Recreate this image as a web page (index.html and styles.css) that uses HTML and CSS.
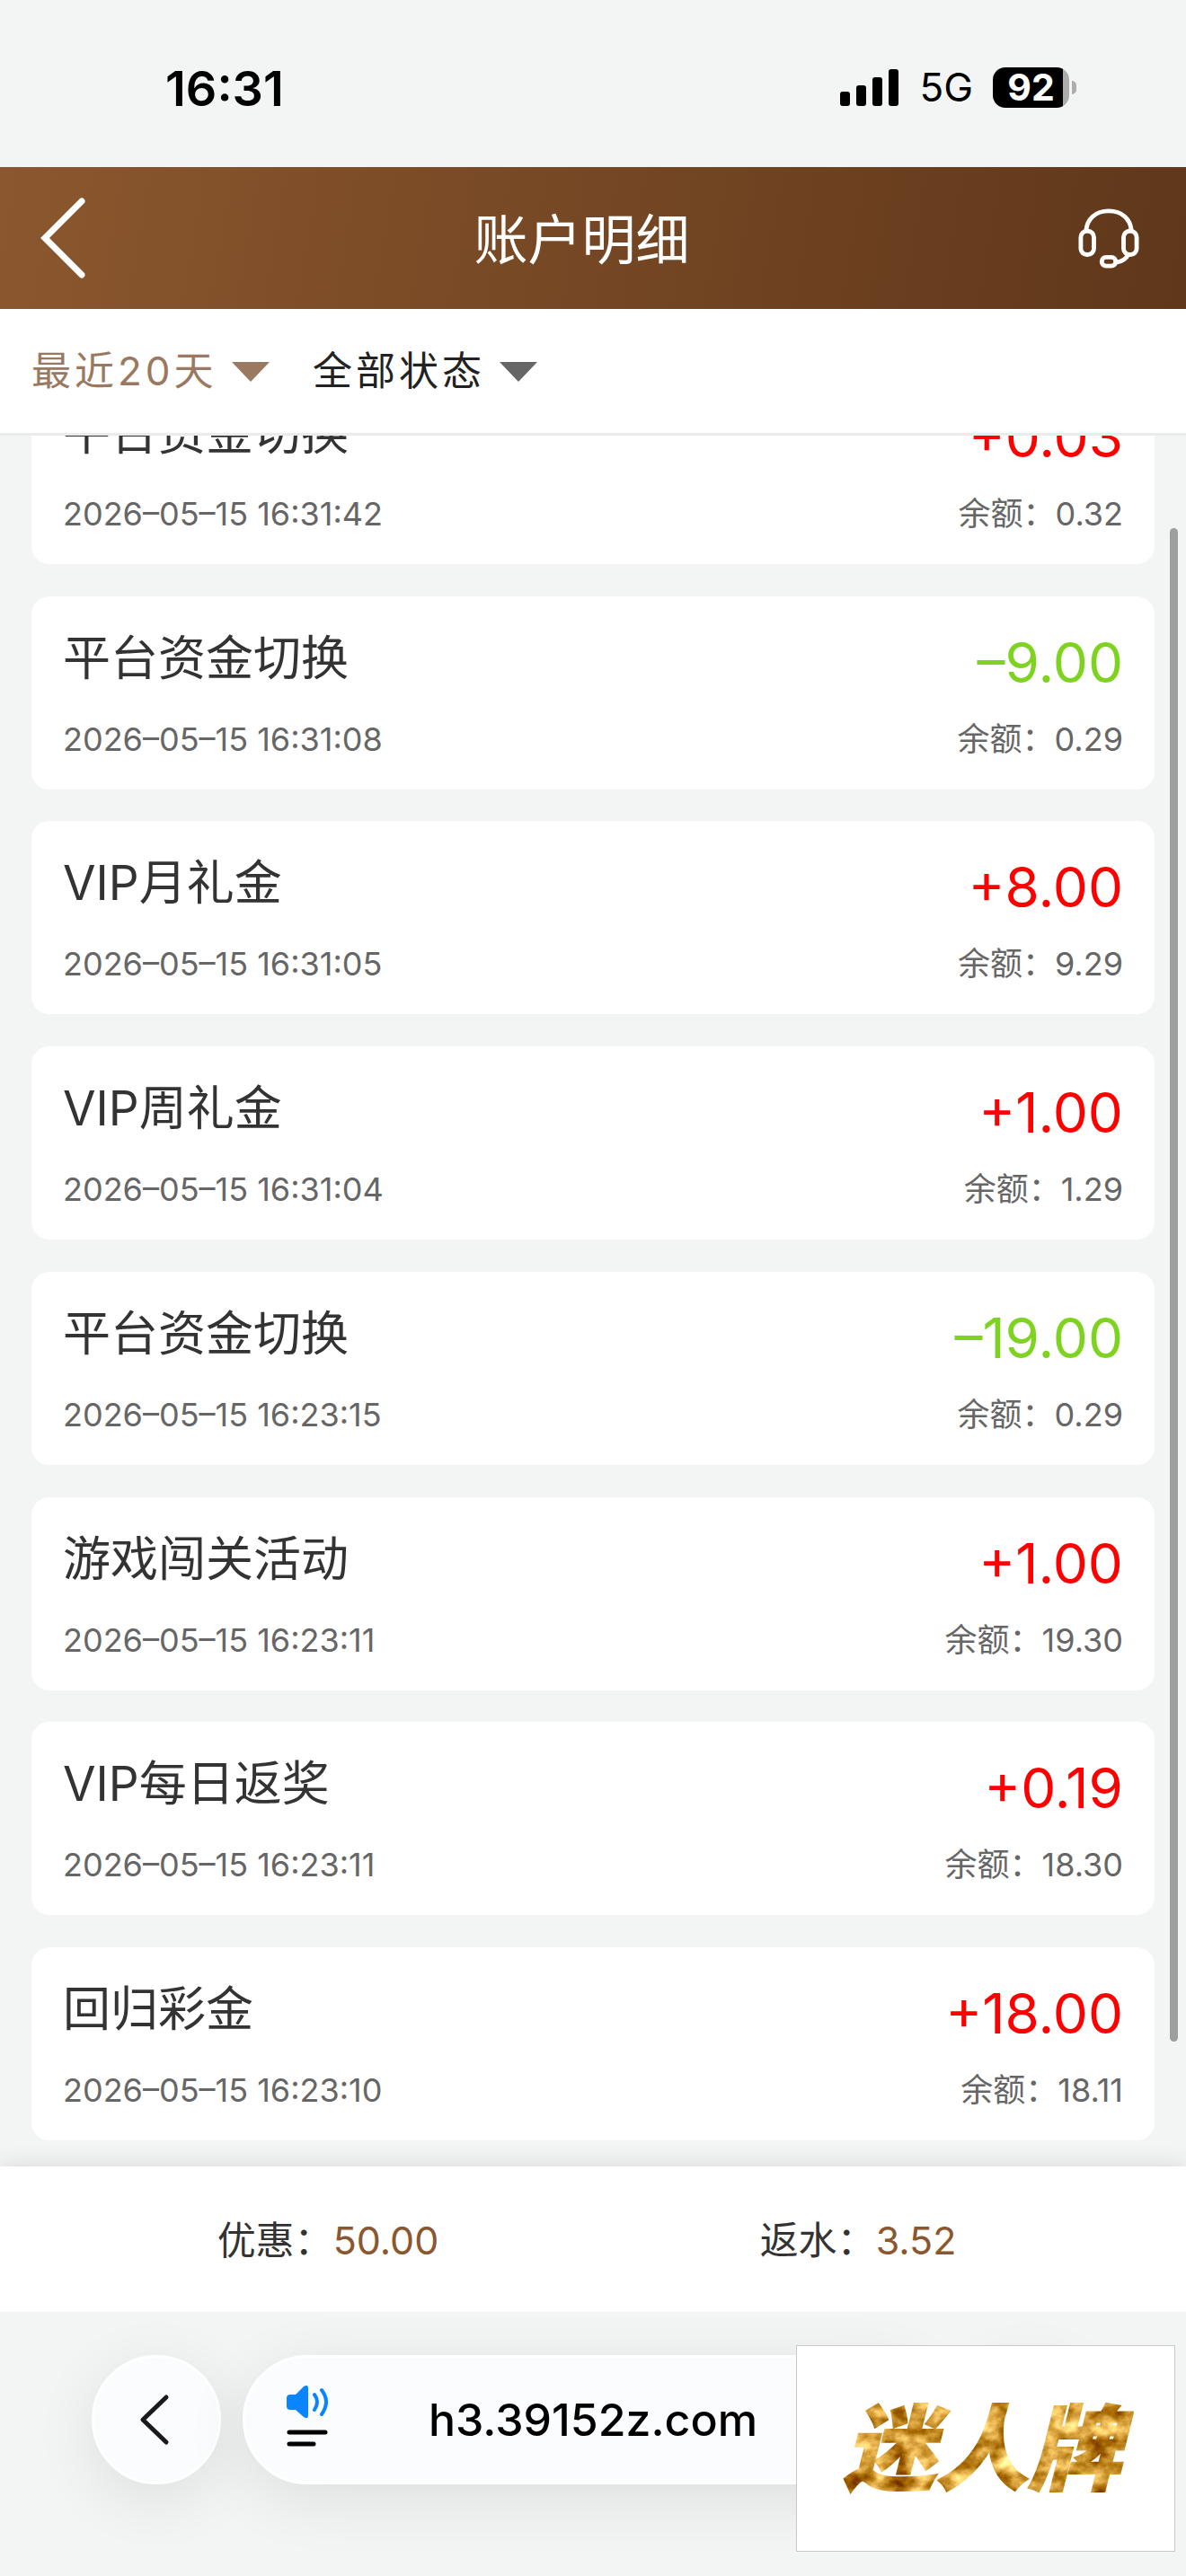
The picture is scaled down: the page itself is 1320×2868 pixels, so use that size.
FILE: index.html
```
<!DOCTYPE html>
<html lang="zh-CN">
<head>
    <meta charset="UTF-8">
    <meta name="viewport" content="width=device-width, initial-scale=1.0">
    <title>账户明细</title>
    <link rel="stylesheet" href="styles.css">
</head>
<body>
    <div class="status-bar">
        <span class="time">16:31</span>
        <div class="status-icons">
            <svg class="signal" viewBox="0 0 66 41" aria-hidden="true">
                <rect x="0" y="25" width="11" height="16" rx="3"/>
                <rect x="18" y="18" width="11" height="23" rx="3"/>
                <rect x="36" y="9" width="11" height="32" rx="3"/>
                <rect x="54" y="0" width="11" height="41" rx="3"/>
            </svg>
            <span class="network">5G</span>
            <div class="battery"><span>92</span></div>
        </div>
    </div>

    <header class="header">
        <button type="button" class="icon-btn" aria-label="返回">
            <svg width="50" height="90" viewBox="0 0 50 90"><path d="M46 4 L5 45 L46 86" fill="none" stroke="#fff" stroke-width="7" stroke-linecap="round"/></svg>
        </button>
        <h1>账户明细</h1>
        <button type="button" class="icon-btn" aria-label="客服">
            <svg width="68" height="68" viewBox="-1 -1 70 70" fill="none" stroke="#fff" stroke-width="5">
                <path d="M8 26 C9 12 19 3 34 3 S59 12 60 26"/>
                <rect x="2" y="26" width="15" height="27" rx="7"/>
                <rect x="51" y="26" width="15" height="27" rx="7"/>
                <path d="M57 52 C54 58 49 61 43 62"/>
                <rect x="26" y="56" width="16" height="10" rx="5"/>
            </svg>
        </button>
    </header>

    <div class="filters">
        <label class="filter active">
            <select aria-label="日期"><option>最近20天</option></select>
            <svg width="42" height="24" viewBox="0 0 42 24"><path d="M0 2 H42 L21 24 Z" fill="currentColor"/></svg>
        </label>
        <label class="filter">
            <select aria-label="状态"><option>全部状态</option></select>
            <svg width="42" height="24" viewBox="0 0 42 24"><path d="M0 2 H42 L21 24 Z" fill="#666"/></svg>
        </label>
    </div>

    <main class="records">
        <ul class="record-list">
            <li class="record">
                <div class="row"><h2>平台资金切换</h2><span class="amount plus">+0.03</span></div>
                <div class="row sub"><time>2026–05–15 16:31:42</time><span>余额：0.32</span></div>
            </li>
            <li class="record">
                <div class="row"><h2>平台资金切换</h2><span class="amount minus">–9.00</span></div>
                <div class="row sub"><time>2026–05–15 16:31:08</time><span>余额：0.29</span></div>
            </li>
            <li class="record">
                <div class="row"><h2>VIP月礼金</h2><span class="amount plus">+8.00</span></div>
                <div class="row sub"><time>2026–05–15 16:31:05</time><span>余额：9.29</span></div>
            </li>
            <li class="record">
                <div class="row"><h2>VIP周礼金</h2><span class="amount plus">+1.00</span></div>
                <div class="row sub"><time>2026–05–15 16:31:04</time><span>余额：1.29</span></div>
            </li>
            <li class="record">
                <div class="row"><h2>平台资金切换</h2><span class="amount minus">–19.00</span></div>
                <div class="row sub"><time>2026–05–15 16:23:15</time><span>余额：0.29</span></div>
            </li>
            <li class="record">
                <div class="row"><h2>游戏闯关活动</h2><span class="amount plus">+1.00</span></div>
                <div class="row sub"><time>2026–05–15 16:23:11</time><span>余额：19.30</span></div>
            </li>
            <li class="record">
                <div class="row"><h2>VIP每日返奖</h2><span class="amount plus">+0.19</span></div>
                <div class="row sub"><time>2026–05–15 16:23:11</time><span>余额：18.30</span></div>
            </li>
            <li class="record">
                <div class="row"><h2>回归彩金</h2><span class="amount plus">+18.00</span></div>
                <div class="row sub"><time>2026–05–15 16:23:10</time><span>余额：18.11</span></div>
            </li>
        </ul>
        <div class="scroll-thumb"></div>
    </main>

    <div class="summary">
        <div>优惠：<b>50.00</b></div>
        <div>返水：<b>3.52</b></div>
    </div>

    <footer class="browser-bar">
        <button type="button" class="round-btn" aria-label="后退">
            <svg width="44" height="60" viewBox="0 0 44 60"><path d="M33 5 L7 30 L33 55" fill="none" stroke="#1a1a1a" stroke-width="5" stroke-linecap="round" stroke-linejoin="round"/></svg>
        </button>
        <div class="address">
            <button type="button" class="icon-btn" aria-label="页面菜单">
                <svg width="46" height="76" viewBox="0 0 46 76">
                    <path d="M4 10 H10 L19 1 Q24 -2 24 3 V33 Q24 38 19 35 L10 27 H4 Q0 27 0 23 V14 Q0 10 4 10 Z" fill="#0a84ff"/>
                    <path d="M31 10 Q37 18 31 27 M39 5 Q49 18 39 32" fill="none" stroke="#0a84ff" stroke-width="4" stroke-linecap="round"/>
                    <path d="M3 52 H43 M3 65 H30" stroke="#000" stroke-width="5" stroke-linecap="round"/>
                </svg>
            </button>
            <input type="text" value="h3.39152z.com" aria-label="网址">
        </div>
        <button type="button" class="round-btn" aria-label="更多">
            <svg width="44" height="10" viewBox="0 0 44 10"><circle cx="5" cy="5" r="4"/><circle cx="22" cy="5" r="4"/><circle cx="39" cy="5" r="4"/></svg>
        </button>
    </footer>

    <!-- floating brand badge -->
    <a class="badge" href="#">
        <svg viewBox="0 0 420 228" role="img" aria-label="迷人牌">
            <defs>
                <filter id="gold" x="0" y="0" width="100%" height="100%" color-interpolation-filters="sRGB">
                    <feTurbulence type="fractalNoise" baseFrequency="0.04 0.05" numOctaves="4" seed="8"/>
                    <feColorMatrix values="1 0 0 0 0.31  1.15 0 0 0 0.02  1.2 0 0 0 -0.4  0 0 0 0 1"/>
                    <feComposite in2="SourceAlpha" operator="in"/>
                </filter>
            </defs>
            <text class="badge-text" x="206" y="152" text-anchor="middle" filter="url(#gold)">迷人牌</text>
        </svg>
    </a>
</body>
</html>
```

FILE: styles.css
```
* {
    box-sizing: border-box;
}

body {
    position: relative;
    display: flex;
    flex-direction: column;
    min-height: 100vh;
    margin: 0;
    background-color: #f3f5f5;
    color: #333;
    font-family: Inter, "Noto Sans CJK SC", sans-serif;
}

button, select, input {
    padding: 0;
    border: none;
    background: none;
    color: inherit;
    font: inherit;
}

svg {
    display: block;
}

/* Phone status bar */
.status-bar {
    display: flex;
    justify-content: space-between;
    height: 186px;
    padding: 67px 130px 0 184px;
    color: #000;
}

.time {
    font-size: 54px;
    font-weight: 600;
    line-height: 64px;
}

.status-icons {
    display: flex;
    align-items: center;
    height: 60px;
}

.signal {
    width: 66px;
    height: 41px;
    margin-right: 22px;
}

.network {
    margin-right: 22px;
    font-size: 44px;
    line-height: 64px;
}

.battery {
    position: relative;
    width: 85px;
    height: 45px;
    border-radius: 14px;
    background: linear-gradient(to right, #000 78px, #adadad 78px);
    color: #fff;
    font-size: 41px;
    font-weight: 700;
    line-height: 45px;
    text-align: center;
}

.battery::after {
    content: "";
    position: absolute;
    top: 15px;
    right: -8px;
    width: 5px;
    height: 15px;
    border-radius: 0 5px 5px 0;
    background-color: #adadad;
}

/* Header */
.header {
    display: flex;
    justify-content: space-between;
    align-items: center;
    height: 158px;
    padding: 0 52px 0 45px;
    background: linear-gradient(100deg, #8b572e, #5f371a);
    color: #fff;
}

.header h1 {
    margin: 0;
    font-size: 60px;
    font-weight: 400;
    line-height: 88px;
    padding-top: 4px;
}

/* Filters */
.filters {
    display: flex;
    gap: 48px;
    height: 141px;
    padding: 0 35px;
    border-bottom: 3px solid #eaebeb;
    background-color: #fff;
    color: #222;
}

.filter {
    display: flex;
    align-items: center;
    gap: 16px;
}

.filter select {
    appearance: none;
    font-size: 44px;
    letter-spacing: 4px;
    line-height: 64px;
}

.filter.active {
    color: #9b7860;
}

/* Records, scrolled a little way down */
.records {
    position: relative;
    display: flex;
    flex: 1;
    overflow: hidden;
}

.record-list {
    display: flex;
    flex: 1;
    flex-direction: column;
    justify-content: space-between;
    margin: -72px 0 0;
    padding: 0 35px 29px;
    list-style: none;
}

.record {
    padding: 37px 35px 31px;
    border-radius: 20px;
    background-color: #fff;
}

.row {
    display: flex;
    justify-content: space-between;
    align-items: flex-start;
}

.row h2 {
    margin: 0;
    font-size: 53px;
    font-weight: 400;
    line-height: 64px;
}

.amount {
    font-size: 62px;
    line-height: 74px;
}

.plus {
    color: #f00;
}

.minus {
    color: #7ed321;
}

.sub {
    margin-top: 23px;
    color: #666;
    font-size: 36px;
    line-height: 50px;
}

.scroll-thumb {
    position: absolute;
    top: 103px;
    right: 9px;
    bottom: 139px;
    width: 9px;
    border-radius: 5px;
    background-color: #9d9e9e;
}

/* Totals */
.summary {
    position: relative;
    display: flex;
    height: 162px;
    padding: 0 70px;
    background-color: #fff;
    box-shadow: 0 0 24px rgba(0, 0, 0, 0.12);
    font-size: 43px;
    line-height: 165px;
    text-align: center;
}

.summary div {
    flex: 1;
}

.summary b {
    color: #8b572e;
    font-weight: 400;
}

/* Browser toolbar */
.browser-bar {
    position: relative;
    display: flex;
    gap: 24px;
    height: 294px;
    padding: 48px 102px 0;
    background-color: #f3f5f5;
    color: #000;
}

.round-btn, .address {
    height: 144px;
    border: 3px solid #fff;
    border-radius: 72px;
    background-color: #fbfcfe;
    box-shadow: 0 16px 70px rgba(0, 0, 0, 0.09);
}

.round-btn {
    display: flex;
    justify-content: center;
    align-items: center;
    width: 144px;
}

.address {
    display: grid;
    flex: 1;
    grid-template-columns: 46px 1fr 46px;
    align-items: center;
    padding: 0 46px;
}

.address input {
    min-width: 0;
    font-size: 50px;
    font-weight: 500;
    line-height: 64px;
    text-align: center;
}

.badge {
    position: absolute;
    right: 12px;
    bottom: 27px;
    width: 422px;
    border: 1px solid #c8c9c9;
    background-color: #fff;
}

.badge-text {
    font-family: "Noto Sans CJK SC", sans-serif;
    font-size: 103px;
    font-style: italic;
    font-weight: 900;
    stroke: #000;
    stroke-width: 2px;
}
```
